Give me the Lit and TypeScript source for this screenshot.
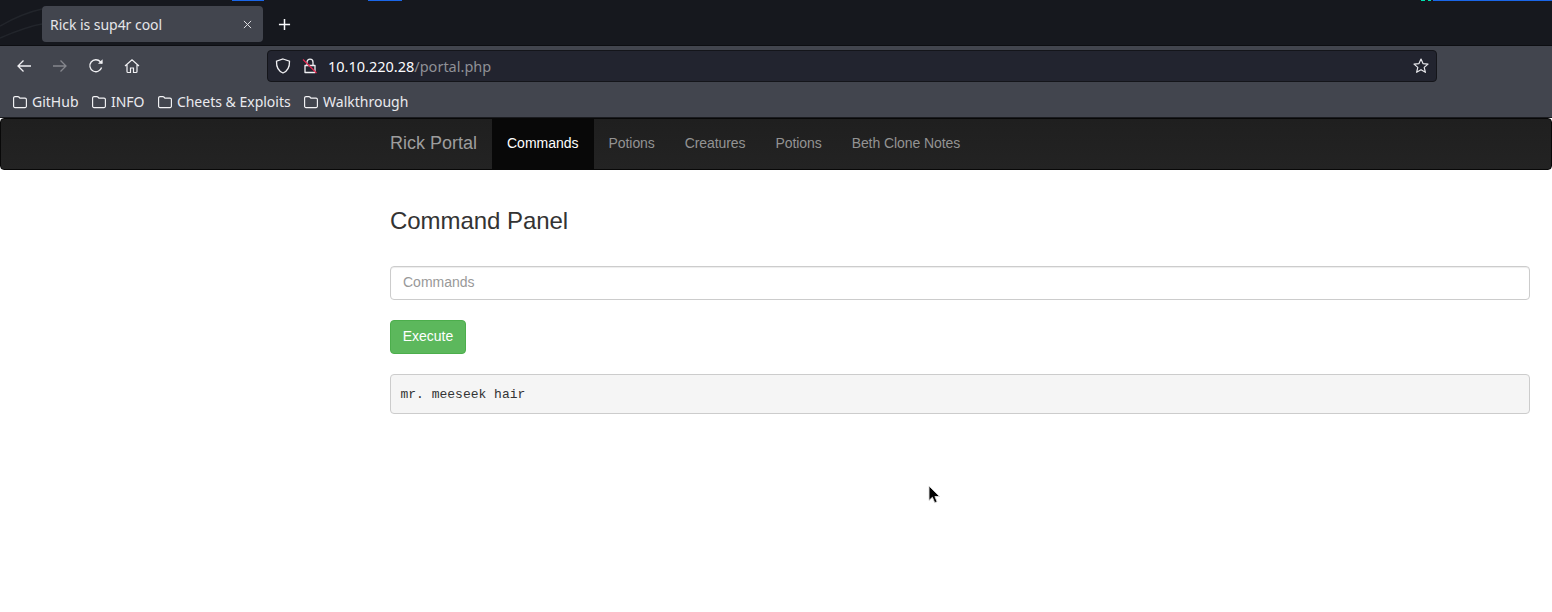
import { LitElement, html, css } from "lit";
import { customElement } from "lit/decorators.js";

const folder = html`<svg class="folder" width="16" height="16" viewBox="0 0 16 16" fill="none" stroke="#f4f4f6" stroke-width="1.15"><path d="M1.6 12.2V4a1.4 1.4 0 0 1 1.4-1.4h2.9c.4 0 .7.1 1 .4l1 1.1h5.1a1.4 1.4 0 0 1 1.4 1.4v6.7a1.4 1.4 0 0 1-1.4 1.4H3a1.4 1.4 0 0 1-1.4-1.4z"/></svg>`;

@customElement("app-root")
export class AppRoot extends LitElement {
  static styles = css`
    :host { display: block; width: 1552px; height: 612px; background: #fff; position: relative; overflow: hidden; font-family: "Liberation Sans", Arial, sans-serif; }
    .ui { font-family: "Noto Sans", "Open Sans", sans-serif; color: #fbfbfe; }
    .tabbar { height: 46px; box-sizing: border-box; background: #16181e; border-bottom: 1px solid #0d0e12; position: relative; display: flex; padding: 6px 0 0 42px; }
    .deco { position: absolute; left: 0; top: 0; }
    .strip { position: absolute; top: 0; height: 1px; }
    .tab { width: 221px; height: 36px; box-sizing: border-box; background: #42454e; border-radius: 4px; display: flex; align-items: center; padding: 0 11px 0 8px; font-size: 14px; letter-spacing: -0.04px; color: #e6e6e9; position: relative; }
    .tab span { flex: 1; }
    .newtab { margin-left: 15px; width: 16px; height: 36px; display: flex; align-items: center; }
    .toolbar { height: 42px; background: #42454e; display: flex; align-items: flex-start; box-sizing: border-box; padding: 4px 0 0 16px; }
    .navicons { display: flex; gap: 20px; width: 251px; height: 32px; align-items: center; }
    .url { width: 1170px; height: 32px; box-sizing: border-box; background: #22242f; border: 1px solid #14151a; border-radius: 4px; display: flex; align-items: center; padding: 0 7px 0 7px; font-size: 14px; }
    .url .addr { margin-left: 10px; flex: 1; font-size: 14.5px; }
    .url .dim { color: #8f9096; }
    .lock { margin-left: 11px; }
    .bookmarks { height: 30px; background: #42454e; display: flex; align-items: center; padding: 0 0 2px 12px; box-sizing: border-box; gap: 12.4px; font-size: 14px; border-bottom: 1px solid #1a1b1f; }
    .bm { display: flex; align-items: center; gap: 4px; color: #eaeaee; }
    .navbar { height: 52px; box-sizing: border-box; background: linear-gradient(#1f1f1f, #232323); border: 1px solid #080808; border-radius: 4px; display: flex; padding-left: 389px; }
    .brand { font-size: 18px; color: #9d9d9d; line-height: 48px; height: 50px; width: 102px; }
    .navlink { font-size: 14px; color: #939393; line-height: 48px; height: 50px; padding: 0 15px; letter-spacing: -0.08px; }
    .navlink.active { color: #fff; background: #080808; letter-spacing: 0; }
    .content { padding: 38px 22px 0 390px; color: #333; }
    h3 { margin: 0; font-size: 24px; font-weight: 500; line-height: 26.4px; letter-spacing: -0.05px; }
    .input { margin-top: 32px; height: 34px; box-sizing: border-box; border: 1px solid #ccc; border-radius: 4px; padding: 0 12px; font-size: 14px; line-height: 30px; color: #999; box-shadow: inset 0 1px 1px rgba(0,0,0,.075); }
    .btn { margin-top: 20px; width: 76px; height: 34px; box-sizing: border-box; background: #5cb85c; border: 1px solid #4cae4c; border-radius: 4px; color: #fff; font-size: 14px; line-height: 30px; text-align: center; }
    pre { margin: 20px 0 0; height: 40px; box-sizing: border-box; background: #f5f5f5; border: 1px solid #ccc; border-radius: 4px; padding: 10.5px 9.5px 0; font-family: "Liberation Mono", monospace; font-size: 13px; line-height: 18.57px; color: #333; }
    .cursor { position: absolute; left: 927px; top: 484px; }
  `;

  render() {
    return html`
      <div class="ui">
        <div class="tabbar">
          <svg class="deco" width="260" height="45" fill="none" stroke="#22252b" stroke-width="1.5">
            <path d="M0 26C14 18 28 12 42 9"/><path d="M0 38C14 32 30 26 42 24"/>
          </svg>
          ${[[232, 32, "#1a66e8"], [368, 34, "#1a66e8"], [1421, 4, "#00e0b0"], [1428, 3, "#00e0b0"], [1433, 119, "#1a66e8"]].map(
            ([l, w, c]) => html`<div class="strip" style="left:${l}px;width:${w}px;background:${c}"></div>`
          )}
          <div class="tab">
            <span>Rick is sup4r cool</span>
            <svg width="9" height="9" viewBox="0 0 10 10" stroke="#e0e0e3" stroke-width="1.1" fill="none"><path d="M1 1l8 8M9 1l-8 8"/></svg>
          </div>
          <div class="newtab">
            <svg width="13" height="13" viewBox="0 0 14 14" stroke="#fbfbfe" stroke-width="1.6" fill="none"><path d="M7 1v12M1 7h12"/></svg>
          </div>
        </div>
        <div class="toolbar">
          <div class="navicons">
            <svg width="16" height="16" viewBox="0 0 16 16" fill="none" stroke="#f0f0f3" stroke-width="1.3"><path d="M15 8H2M7.5 2.5L2 8l5.5 5.5"/></svg>
            <svg width="16" height="16" viewBox="0 0 16 16" fill="none" stroke="#85878d" stroke-width="1.3"><path d="M1 8h13M8.5 2.5L14 8l-5.5 5.5"/></svg>
            <svg width="16" height="16" viewBox="0 0 16 16" fill="none" stroke="#f0f0f3" stroke-width="1.3"><path d="M13.6 9.5A6 6 0 1 1 12.4 3.8L14 5.2"/><path d="M14.6 1.2v4.6H10z" fill="#f0f0f3" stroke="none"/></svg>
            <svg width="16" height="16" viewBox="0 0 16 16" fill="none" stroke="#f0f0f3" stroke-width="1.2"><path d="M1 8l7-6.3L15 8M3 6.5v7a1 1 0 0 0 1 1h2.5V10h3v4.5H12a1 1 0 0 0 1-1v-7"/></svg>
          </div>
          <div class="url">
            <svg width="16" height="16" viewBox="0 0 16 16" fill="none" stroke="#f0f0f3" stroke-width="1.3"><path d="M8 1L14.5 3.2C14.7 9 12.6 13 8 15 3.4 13 1.3 9 1.5 3.2z"/></svg>
            <svg class="lock" width="16" height="16" viewBox="0 0 16 16" fill="none"><path d="M5 7V4.2a3 3 0 0 1 6 0V7M3 7.5h10v7H3z" stroke="#f0f0f3" stroke-width="1.3" stroke-linejoin="round"/><path d="M1 1.5L14.5 15" stroke="#e22850" stroke-width="1.3"/></svg>
            <div class="addr">10.10.220.28<span class="dim">/portal.php</span></div>
            <svg width="16" height="16" viewBox="0 0 16 16" fill="none" stroke="#e8e8ec" stroke-width="1.2" stroke-linejoin="round"><path d="M8 1l2 4.6 5 .5-3.8 3.3 1.2 4.9L8 11.7l-4.4 2.6 1.2-4.9L1 6.1l5-.5z"/></svg>
          </div>
        </div>
        <div class="bookmarks">
          ${["GitHub", "INFO", "Cheets & Exploits", "Walkthrough"].map((t) => html`<div class="bm">${folder}<span>${t}</span></div>`)}
        </div>
      </div>
      <nav class="navbar">
        <div class="brand">Rick Portal</div>
        <div class="navlink active">Commands</div>
        <div class="navlink">Potions</div>
        <div class="navlink">Creatures</div>
        <div class="navlink">Potions</div>
        <div class="navlink">Beth Clone Notes</div>
      </nav>
      <main class="content">
        <h3>Command Panel</h3>
        <div class="input">Commands</div>
        <div class="btn">Execute</div>
        <pre>mr. meeseek hair</pre>
      </main>
      <svg class="cursor" width="15" height="22" viewBox="0 0 15 22"><path d="M2 2v14.5l3.4-3.2 2.3 5.4 2.4-1-2.2-5.2h4.7z" fill="#000" stroke="#ddd" stroke-width=".9"/></svg>
    `;
  }
}
